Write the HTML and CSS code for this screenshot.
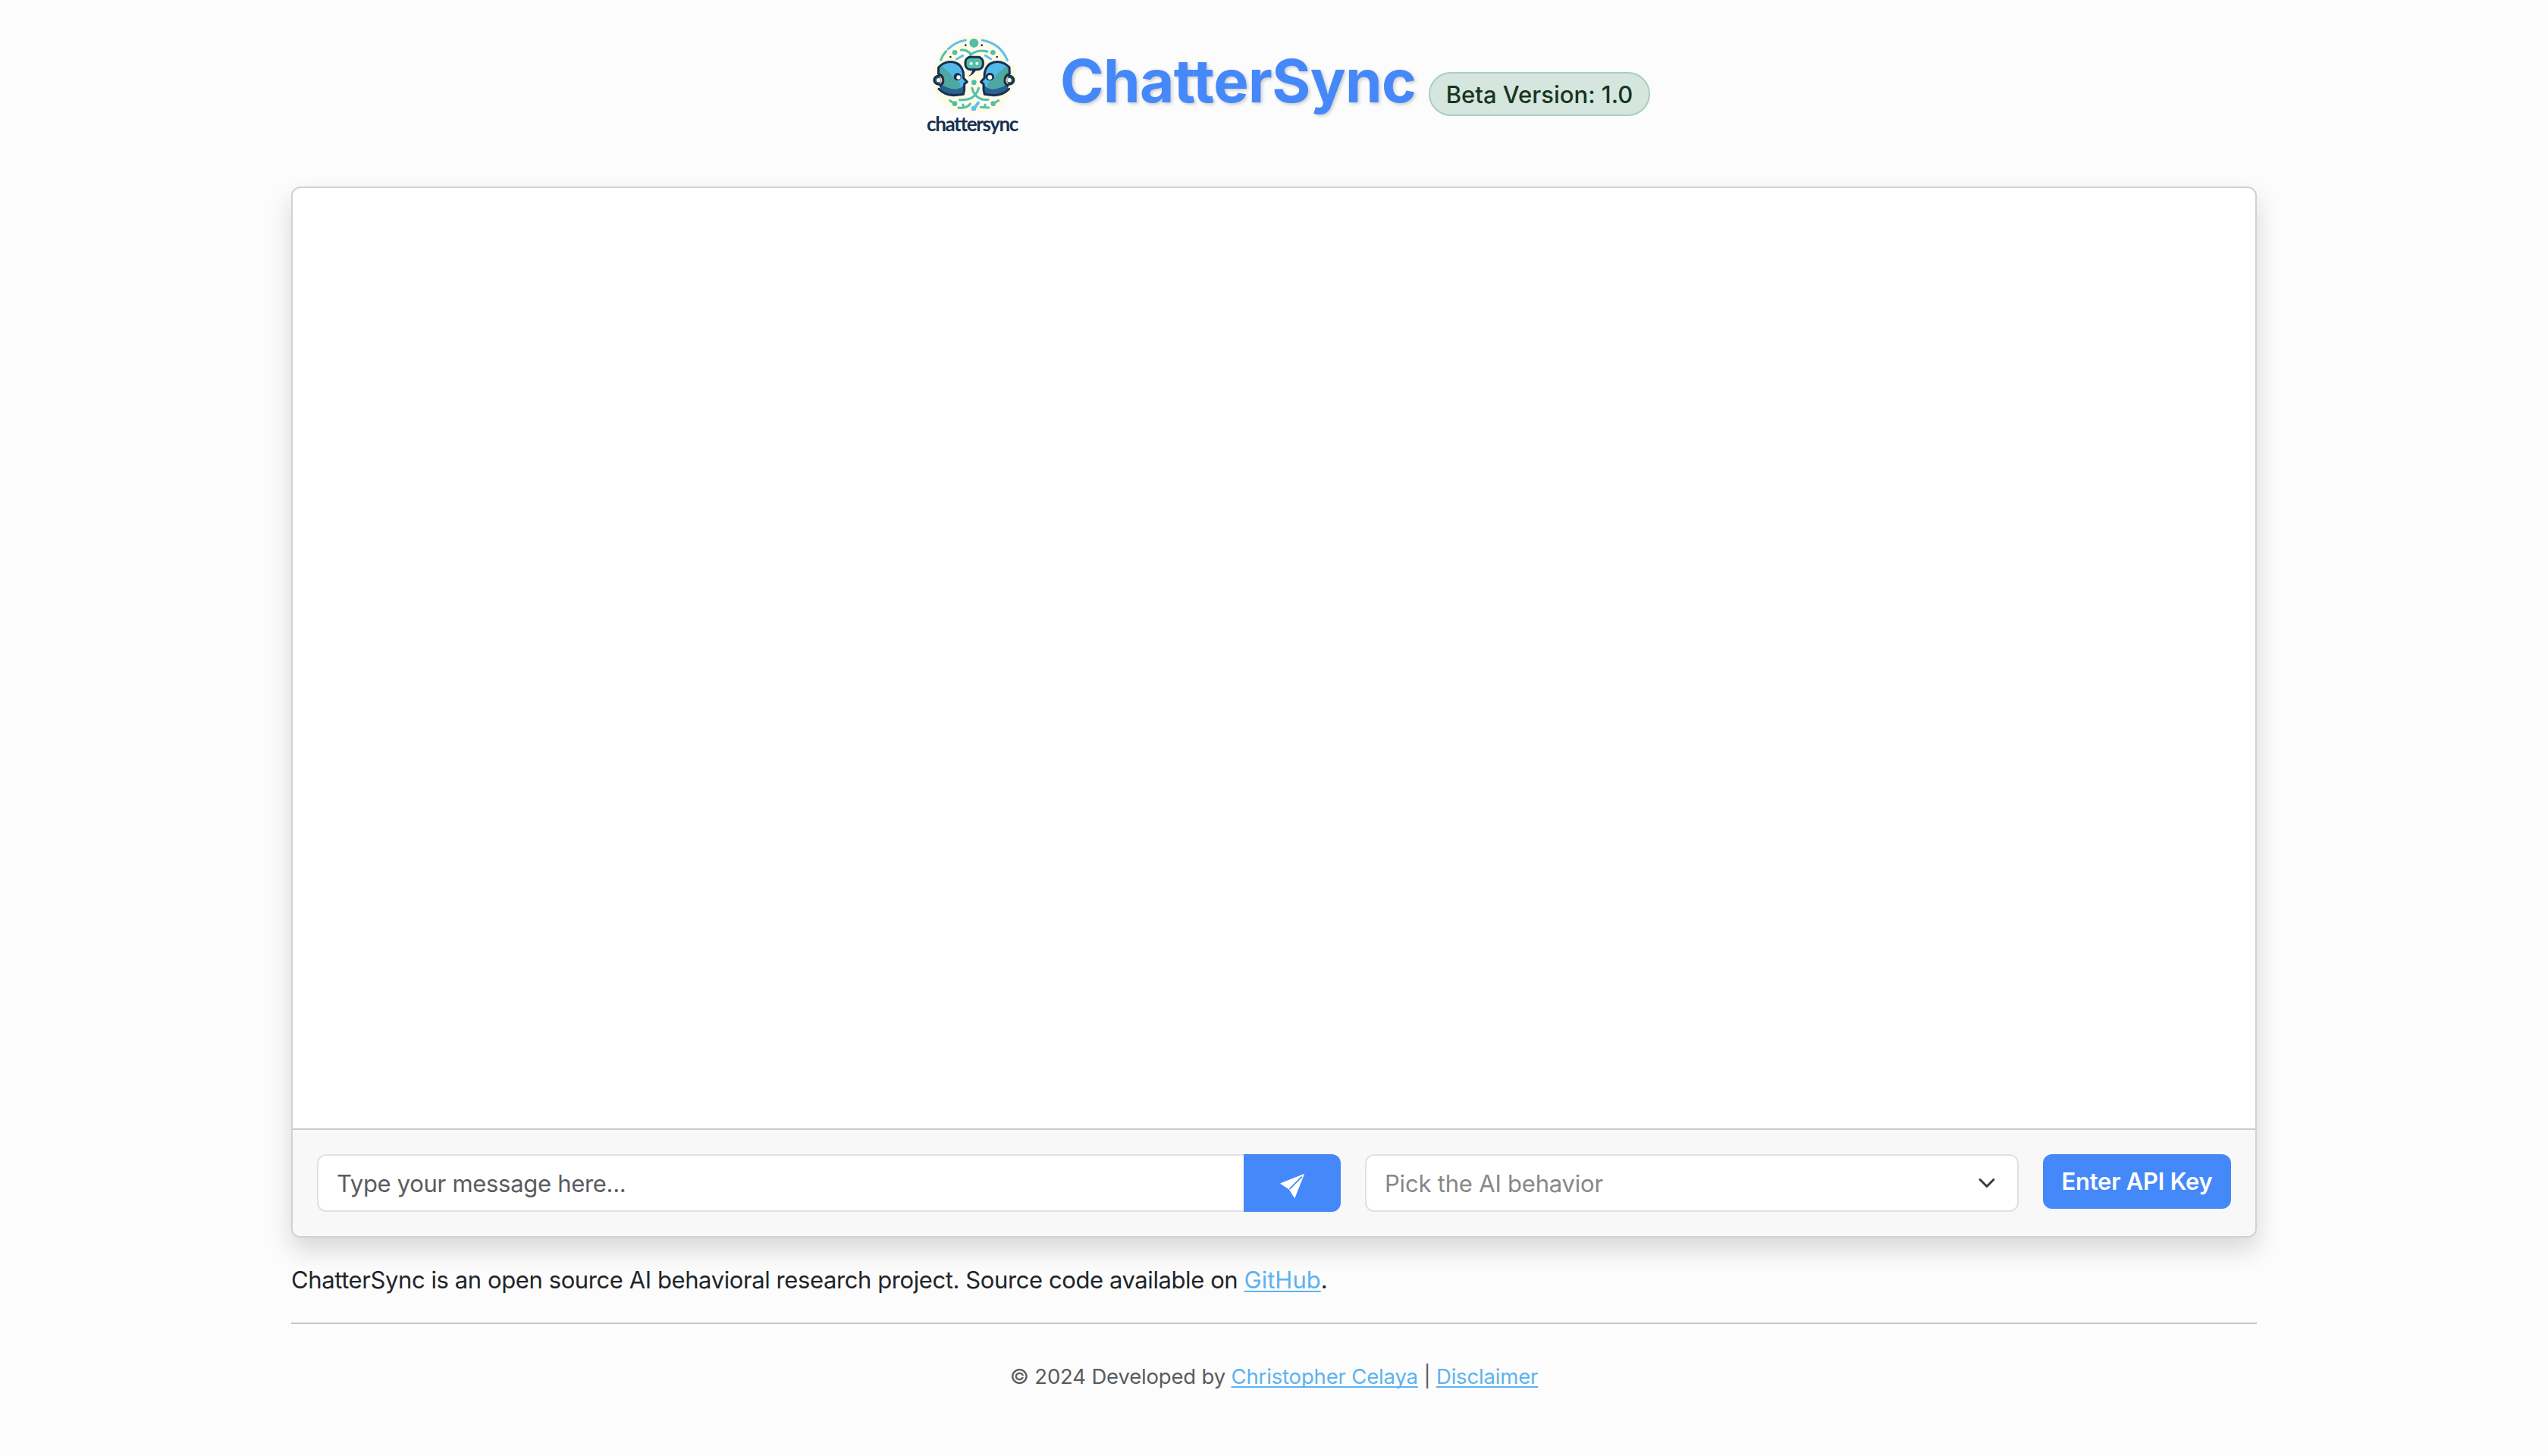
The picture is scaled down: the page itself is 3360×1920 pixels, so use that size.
FILE: index.html
```
<!DOCTYPE html>
<html lang="en">
<head>
<meta charset="utf-8">
<title>ChatterSync</title>
<link rel="stylesheet" href="styles.css">
</head>
<body>
<header class="header">
  <svg class="logo" viewBox="-48 0 558 480" role="img" aria-label="chattersync">
    <path fill="#fdfbe6" d="M252 50c65 0 118 38 140 98 26 18 36 60 24 96-5 20-20 32-28 46-14 30-34 52-62 58-20 8-42 6-52 4-14 6-30 6-44 0-22 4-46 0-64-8-28-12-42-32-56-54-26-34-34-96-4-138 22-58 76-102 146-102z"/>
    <g fill="none" stroke-linecap="round" stroke-width="9">
      <path stroke="#60bff2" d="M151 104Q181 75 220 69M286 69Q358 82 385 148M184 144L209 130M298 130L320 143" />
      <path stroke="#55beb0" d="M122 147Q130 126 143 113M202 108Q222 105 239 122M238 129Q263 103 306 114M246 259Q252 289 280 301Q290 306 309 304M272 259Q262 288 242 298Q224 306 196 305M158 308L173 318M192 336Q224 340 238 321M210 324V335M280 334L312 336M297 324V335M350 308L333 318"/>
      <path stroke="#60bff2" stroke-width="12" d="M270 317L257 335"/>
    </g>
    <circle cx="253" cy="80" r="18" fill="#55beaa"/>
    <g fill="#55beaa"><circle cx="177" cy="118" r="10"/><circle cx="328" cy="118" r="10"/><circle cx="253" cy="236" r="10"/><circle cx="177" cy="320" r="10"/><circle cx="329" cy="320" r="10"/></g>
    <circle cx="252" cy="339" r="10" fill="#60bff2"/>
    <g fill="#17304f"><circle cx="220" cy="89" r="4"/><circle cx="284" cy="89" r="4"/><circle cx="160" cy="135" r="4"/><circle cx="344" cy="135" r="4"/></g>
    <path fill="#17304f" d="M234 180L248 183Q244 205 230 212Q246 212 265 183z"/>
    <rect x="219" y="136" width="70" height="49" rx="20" fill="#55beaa" stroke="#17304f" stroke-width="9"/>
    <circle cx="242" cy="161" r="6" fill="#fdfbe6"/><circle cx="265" cy="161" r="6" fill="#fdfbe6"/>
    <g id="head">
      <path fill="#55b9e8" d="M112 190C116 158 146 149 174 158Q205 166 211 197L214 218L227 235L217 244L212 282Q165 298 124 267Q106 240 112 190z"/>
      <path fill="#4da99f" d="M112 180Q116 174 126 172Q140 186 160 200Q174 226 196 237Q205 252 190 263Q163 266 135 250Q114 232 112 180z"/>
      <path fill="#2a6190" d="M114 236Q145 262 182 263Q205 258 213 246L212 282Q164 301 120 264z"/>
      <path fill="none" stroke="#17304f" stroke-width="9" stroke-linecap="round" stroke-linejoin="round" d="M112 202L113 176Q140 148 174 156Q204 164 211 198L212 219L226 234L215 242V265L211 283L188 286Q142 292 114 262"/>
      <circle cx="112" cy="227" r="17" fill="#2a4e72" stroke="#17304f" stroke-width="8"/>
      <path fill="none" stroke="#17304f" stroke-width="8" d="M112 202Q132 207 132 228Q132 244 117 252"/>
      <path fill="none" stroke="#efc681" stroke-width="5" d="M118 214Q131 226 119 241"/><circle cx="113" cy="227" r="8" fill="#fdfbe6"/>
      <circle cx="188" cy="214" r="15" fill="#17304f"/><circle cx="192" cy="216" r="8" fill="#fff"/>
    </g>
    <use href="#head" transform="matrix(-1 0 0 1 506 0)"/>
    <circle cx="314" cy="214" r="15" fill="#17304f"/><circle cx="316" cy="216" r="9" fill="#fff"/>
    <text class="logo-text" x="66" y="428" textLength="364" lengthAdjust="spacing">chattersync</text>
  </svg>
  <h1 class="title">ChatterSync</h1>
  <div class="badge">Beta Version: 1.0</div>
</header>
<main class="container">
  <section class="card">
    <div class="messages"></div>
    <div class="controls">
      <div class="message-field">Type your message here...</div>
      <button class="send" aria-label="Send"><svg viewBox="0 0 32 32"><path fill="#fff" stroke="#fff" stroke-linejoin="round" d="M.7 12.7 31.4.6 19.2 31.4 12.2 20.2z"/><path stroke="#4488f9" stroke-width="1.8" d="M28.8 3.6 12.6 19.8"/></svg></button>
      <div class="select"><span>Pick the AI behavior</span><svg viewBox="0 0 16 16"><path fill="none" stroke="#343a40" stroke-linecap="round" stroke-linejoin="round" stroke-width="2" d="m2 5 6 6 6-6"/></svg></div>
      <button class="api">Enter API Key</button>
    </div>
  </section>
  <p class="about">ChatterSync is an open source AI behavioral research project. Source code available on <a href="#">GitHub</a>.</p>
  <footer class="footer">© 2024 Developed by <a href="#">Christopher Celaya</a> | <a href="#">Disclaimer</a></footer>
</main>
</body>
</html>
```
FILE: styles.css
```
* { box-sizing: border-box; }
body {
  margin: 0;
  min-height: 1920px;
  background: #fcfcfc;
  color: #212529;
  font-family: Inter, "Liberation Sans", sans-serif;
  font-size: 31px;
  line-height: 48px;
}
a { color: #5cb3f0; text-decoration-thickness: 2px; text-underline-offset: 3px; text-decoration-skip-ink: none; }
.header { display: flex; justify-content: center; align-items: flex-start; height: 246px; padding-top: 30px; }
.logo { width: 186px; height: 160px; margin-right: 28px; }
.logo-text { font: 700 78px Lato, sans-serif; fill: #17304f; }
.title {
  width: 486px;
  margin: 29px 0 0;
  color: #4488f9;
  font-size: 78px;
  font-weight: 700;
  letter-spacing: -.6px;
  line-height: 96px;
  white-space: nowrap;
  text-shadow: 2px 2px 4px rgba(0, 0, 0, .2);
}
.badge {
  width: 292px;
  height: 58px;
  margin-top: 65px;
  border: 2px solid #a9cfbd;
  border-radius: 29px;
  background: #d5e6de;
  color: #17351f;
  font-weight: 500;
  line-height: 56px;
  text-align: center;
  white-space: nowrap;
}
.container { width: 2592px; margin: 0 auto; }
.card {
  display: flex;
  flex-direction: column;
  height: 1386px;
  border: 2px solid #d0d1d1;
  border-radius: 12px;
  background: #fff;
  box-shadow: 0 16px 32px rgba(0, 0, 0, .15);
  overflow: hidden;
}
.messages { flex: 1; }
.controls {
  display: flex;
  align-items: flex-start;
  height: 142px;
  padding: 32px;
  border-top: 2px solid #c8c9c9;
  background: #f8f8f8;
}
.message-field, .select {
  height: 76px;
  padding: 0 24px;
  border: 2px solid #dee2e6;
  background: #fff;
  line-height: 73px;
  white-space: nowrap;
}
.message-field { width: 1222px; border-right: 0; border-radius: 12px 0 0 12px; color: #595c5f; letter-spacing: -.3px; }
.select {
  display: flex;
  align-items: center;
  justify-content: space-between;
  width: 862px;
  margin: 0 32px;
  padding-right: 28px;
  border-radius: 12px;
  color: #888;
  letter-spacing: -.2px;
}
.select svg { width: 24px; height: 24px; }
button { padding: 0; border: 0; background: #4488f9; color: #fff; font: inherit; }
.send { width: 128px; height: 76px; border-radius: 0 12px 12px 0; }
.send svg { display: block; width: 32px; height: 32px; margin: 8px auto 0; }
.api { width: 248px; height: 72px; border-radius: 12px; font-weight: 600; letter-spacing: -.25px; white-space: nowrap; }
.about { margin: 0; padding-top: 32px; height: 112px; letter-spacing: -.41px; white-space: nowrap; }
.about a { letter-spacing: 0; }
.footer {
  padding-top: 48px;
  border-top: 2px solid #c6c6c6;
  color: #595c5f;
  font-size: 27.5px;
  letter-spacing: -.17px;
  line-height: 42px;
  text-align: center;
}
```
